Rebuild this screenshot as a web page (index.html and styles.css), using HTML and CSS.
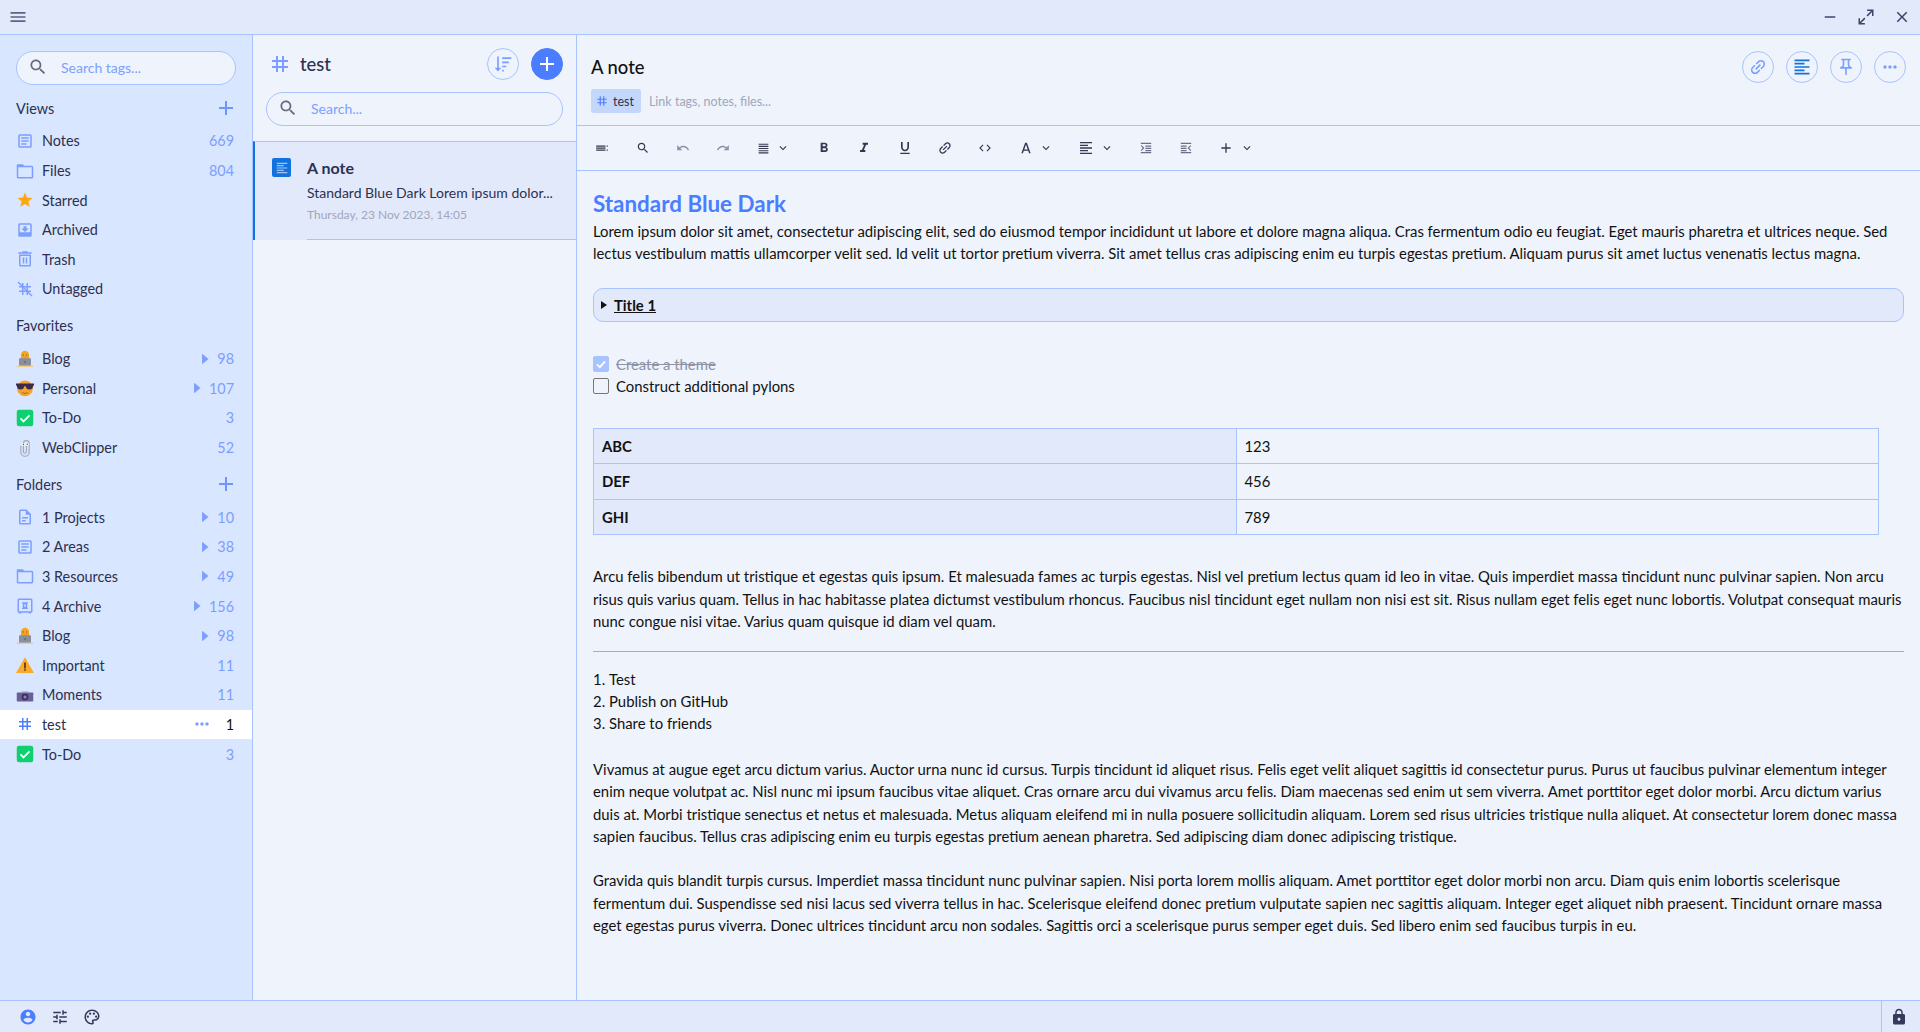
FILE: index.html
```html
<!DOCTYPE html>
<html lang="en">
<head>
    <meta charset="UTF-8">
    <title>A note</title>
    <link rel="stylesheet" href="styles.css">
</head>
<body>
<svg class="sprite" xmlns="http://www.w3.org/2000/svg">
    <symbol id="i-menu" viewBox="0 0 24 24"><path d="M3 18h18v-2H3v2zm0-5h18v-2H3v2zm0-7v2h18V6H3z"/></symbol>
    <symbol id="i-search" viewBox="0 0 24 24"><path d="M15.5 14h-.79l-.28-.27C15.41 12.59 16 11.11 16 9.5 16 5.91 13.09 3 9.5 3S3 5.91 3 9.5 5.91 16 9.5 16c1.61 0 3.09-.59 4.23-1.57l.27.28v.79l5 4.99L20.49 19l-4.99-5zm-6 0C7.01 14 5 11.99 5 9.5S7.01 5 9.5 5 14 7.01 14 9.5 11.99 14 9.5 14z"/></symbol>
    <symbol id="i-add" viewBox="0 0 24 24"><path d="M19 13h-6v6h-2v-6H5v-2h6V5h2v6h6v2z"/></symbol>
    <symbol id="i-close" viewBox="0 0 24 24"><path d="M19 6.41L17.59 5 12 10.59 6.41 5 5 6.41 10.59 12 5 17.59 6.41 19 12 13.41 17.59 19 19 17.59 13.41 12z"/></symbol>
    <symbol id="i-expand" viewBox="0 0 24 24"><path d="M3 21l7.500-7.500M3 13.500V21h7.500M21 3l-7.500 7.500M13.500 3H21v7.500" fill="none" stroke="currentColor" stroke-width="2"/></symbol>
    <symbol id="i-min" viewBox="0 0 24 24"><path d="M5 11h14v2H5z"/></symbol>
    <symbol id="i-note" viewBox="0 0 24 24"><path d="M5 3h14a2 2 0 0 1 2 2v14a2 2 0 0 1-2 2H5a2 2 0 0 1-2-2V5a2 2 0 0 1 2-2zm0 2v14h14V5H5zm2 2h10v2H7V7zm0 4h10v2H7v-2zm0 4h7v2H7v-2z"/></symbol>
    <symbol id="i-folder" viewBox="0 0 24 24"><path d="M2 3h7l2 2h10a2 2 0 0 1 2 2v13a2 2 0 0 1-2 2H3a2 2 0 0 1-2-2V4a1 1 0 0 1 1-1zm1 4v13h18V7H3z"/></symbol>
    <symbol id="i-star" viewBox="0 0 24 24"><path d="M12 17.270L18.180 21l-1.640-7.030L22 9.240l-7.190-.61L12 2 9.190 8.630 2 9.240l5.460 4.730L5.820 21z"/></symbol>
    <symbol id="i-archive" viewBox="0 0 24 24"><path d="M5 3h14a2 2 0 0 1 2 2v14a2 2 0 0 1-2 2H5a2 2 0 0 1-2-2V5a2 2 0 0 1 2-2zm0 2v10h14V5H5zm5 2h4v3h3l-5 4.500L7 10h3V7z"/></symbol>
    <symbol id="i-trash" viewBox="0 0 24 24"><path d="M9 1.500h6l1 1.500h5v2H3V3h5l1-1.500zM4 6h16v14a2 2 0 0 1-2 2H6a2 2 0 0 1-2-2V6zm2 2v12h12V8H6zm3 2h2v8H9v-8zm4 0h2v8h-2v-8z"/></symbol>
    <symbol id="i-untagged" viewBox="0 0 24 24"><path d="M20 10V8h-4V4h-2v4h-4V4H8v4H4v2h4v4H4v2h4v4h2v-4h4v4h2v-4h4v-2h-4v-4h4zm-6 4h-4v-4h4v4z"/><path d="M3.400 2L22 20.600 20.600 22 2 3.400z"/></symbol>
    <symbol id="i-tag" viewBox="0 0 24 24"><path d="M20 10V8h-4V4h-2v4h-4V4H8v4H4v2h4v4H4v2h4v4h2v-4h4v4h2v-4h4v-2h-4v-4h4zm-6 4h-4v-4h4v4z"/></symbol>
    <symbol id="i-doc" viewBox="0 0 24 24"><path d="M6 2h8l6 6v12a2 2 0 0 1-2 2H6a2 2 0 0 1-2-2V4a2 2 0 0 1 2-2zm0 2v16h12V9h-5V4H6zm2 8h8v2H8v-2zm0 4h5v2H8v-2z"/></symbol>
    <symbol id="i-vault" viewBox="0 0 24 24"><path d="M4 2h16a2 2 0 0 1 2 2v15a2 2 0 0 1-2 2v1h-3v-1H7v1H4v-1a2 2 0 0 1-2-2V4a2 2 0 0 1 2-2zm0 2v15h16V4H4zm4 3h8v1l-1 1v5l1 1v1H8v-1l1-1V9L8 8V7zm3 3v3h2v-3h-2z"/></symbol>
    <symbol id="i-caret" viewBox="0 0 24 24"><path d="M7 3l11 9-11 9z"/></symbol>
    <symbol id="i-more" viewBox="0 0 24 24"><path d="M6 10c-1.100 0-2 .9-2 2s.9 2 2 2 2-.9 2-2-.9-2-2-2zm12 0c-1.100 0-2 .9-2 2s.9 2 2 2 2-.9 2-2-.9-2-2-2zm-6 0c-1.100 0-2 .9-2 2s.9 2 2 2 2-.9 2-2-.9-2-2-2z"/></symbol>
    <symbol id="i-blog" viewBox="0 0 24 24"><circle cx="12" cy="6.500" r="5.500" fill="#f5a623"/><path d="M6.500 8h11v6h-11z" fill="#f0a020"/><circle cx="9.800" cy="6.500" r=".8" fill="#8a5a10"/><circle cx="14.200" cy="6.500" r=".8" fill="#8a5a10"/><rect x="4" y="11" width="16" height="10" rx="1" fill="#8a8fa0"/><circle cx="12" cy="16" r="1.200" fill="#60657a"/><path d="M1 21h22v1.500H1z" fill="#f3c76a"/></symbol>
    <symbol id="i-cool" viewBox="0 0 24 24"><circle cx="12" cy="12.500" r="10.500" fill="#f5a32a"/><path d="M0 6h24v2.500h-1c0 3-2 5.500-5 5.500s-4.800-2-5-4.500h-2C10.800 12 9 14 6 14S1 11.500 1 8.500H0z" fill="#3a2a50"/><path d="M8 18c2.500 1.500 5.500 1.500 8 0" fill="none" stroke="#a85c10" stroke-width="1.200"/></symbol>
    <symbol id="i-check" viewBox="0 0 24 24"><rect x="1" y="1" width="22" height="22" rx="3" fill="#0ed06e"/><path d="M6 12.500l4 4 8-8" fill="none" stroke="#fff" stroke-width="2.400"/></symbol>
    <symbol id="i-clip" viewBox="0 0 24 24"><path d="M6.500 9v8.500a5.500 5.500 0 0 0 11 0V6a3.800 3.800 0 0 0-7.600 0v11a2 2 0 0 0 4 0V9" fill="none" stroke="#a3a7b5" stroke-width="1.500"/><circle cx="10" cy="7" r="2" fill="#fff"/><circle cx="15" cy="7" r="2" fill="#fff"/><circle cx="10" cy="7" r=".9" fill="#444"/><circle cx="15" cy="7" r=".9" fill="#444"/></symbol>
    <symbol id="i-warn" viewBox="0 0 24 24"><path d="M12 1.500L24 22.500H0z" fill="#fca82a"/><path d="M11 8.500h2v8h-2zM11 17.800h2v2h-2z" fill="#3a2a20"/></symbol>
    <symbol id="i-camera" viewBox="0 0 24 24"><path d="M8 6.500h8l1 2H7z" fill="#b9bccb"/><rect x="1" y="8.500" width="22" height="12" rx="1" fill="#6a5f96"/><circle cx="12" cy="14.500" r="4.500" fill="#3d3560"/><circle cx="12" cy="14.500" r="2" fill="#8f85c0"/></symbol>
    <symbol id="i-sort" viewBox="0 0 24 24"><path d="M5 3h2v13.500h3L6 21l-4-4.500h3V3zM11 4h11v2H11V4zm0 5h8v2h-8V9zm0 5h5v2h-5v-2zm0 5h2v2h-2v-2z"/></symbol>
    <symbol id="i-link" viewBox="0 0 24 24"><g transform="rotate(-45 12 12)"><path d="M3.900 12c0-1.710 1.390-3.100 3.100-3.100h4V7H7c-2.760 0-5 2.240-5 5s2.240 5 5 5h4v-1.900H7c-1.710 0-3.100-1.390-3.100-3.100zM8 13h8v-2H8v2zm9-6h-4v1.900h4c1.710 0 3.100 1.390 3.100 3.100s-1.390 3.100-3.100 3.100h-4V17h4c2.760 0 5-2.240 5-5s-2.240-5-5-5z"/></g></symbol>
    <symbol id="i-left" viewBox="0 0 24 24"><path d="M15 15H3v2h12v-2zm0-8H3v2h12V7zM3 13h18v-2H3v2zm0 8h18v-2H3v2zM3 3v2h18V3H3z"/></symbol>
    <symbol id="i-pin" viewBox="0 0 24 24"><path d="M14 4v5c0 1.120.37 2.160 1 3H9c.65-.86 1-1.900 1-3V4h4m3-2H7c-.55 0-1 .45-1 1s.45 1 1 1h1v5c0 1.660-1.340 3-3 3v2h5.970v7l1 1 1-1v-7H19v-2c-1.660 0-3-1.340-3-3V4h1c.55 0 1-.45 1-1s-.45-1-1-1z"/></symbol>
    <symbol id="i-side" viewBox="0 0 24 24"><path d="M2 7.500h16v2.200H2zM2 11h16v2.200H2zM2 14.500h16v2.200H2zM20 7.500h2v2.200h-2zM20 14.500h2v2.200h-2z"/></symbol>
    <symbol id="i-undo" viewBox="0 0 24 24"><path d="M12.500 8c-2.650 0-5.050.99-6.900 2.600L2 7v9h9l-3.620-3.620c1.390-1.160 3.160-1.880 5.120-1.880 3.540 0 6.550 2.310 7.600 5.500l2.370-.78C21.080 11.030 17.150 8 12.500 8z"/></symbol>
    <symbol id="i-redo" viewBox="0 0 24 24"><path d="M18.400 10.600C16.550 8.990 14.150 8 11.500 8c-4.650 0-8.580 3.030-9.960 7.220L3.900 16c1.050-3.190 4.050-5.500 7.600-5.500 1.950 0 3.730.72 5.120 1.880L13 16h9V7l-3.600 3.600z"/></symbol>
    <symbol id="i-justify" viewBox="0 0 24 24"><path d="M3 21h18v-2H3v2zm0-4h18v-2H3v2zm0-4h18v-2H3v2zm0-4h18V7H3v2zm0-6v2h18V3H3z"/></symbol>
    <symbol id="i-chev" viewBox="0 0 24 24"><path d="M7.410 8.590L12 13.170l4.590-4.580L18 10l-6 6-6-6z"/></symbol>
    <symbol id="i-bold" viewBox="0 0 24 24"><path d="M15.600 10.790c.97-.67 1.650-1.770 1.650-2.790 0-2.260-1.750-4-4-4H7v14h7.040c2.090 0 3.710-1.700 3.710-3.790 0-1.520-.86-2.820-2.150-3.420zM10 6.500h3c.83 0 1.500.67 1.500 1.500s-.67 1.500-1.500 1.500h-3v-3zm3.500 9H10v-3h3.500c.83 0 1.500.67 1.500 1.500s-.67 1.500-1.500 1.500z"/></symbol>
    <symbol id="i-italic" viewBox="0 0 24 24"><path d="M10 4v3h2.210l-3.420 8H6v3h8v-3h-2.210l3.420-8H18V4z"/></symbol>
    <symbol id="i-under" viewBox="0 0 24 24"><path d="M12 17c3.310 0 6-2.690 6-6V3h-2.500v8c0 1.930-1.570 3.500-3.500 3.500S8.500 12.930 8.500 11V3H6v8c0 3.310 2.690 6 6 6zm-7 2v2h14v-2H5z"/></symbol>
    <symbol id="i-code" viewBox="0 0 24 24"><path d="M9.400 16.600L4.800 12l4.600-4.600L8 6l-6 6 6 6 1.400-1.400zm5.200 0l4.600-4.600-4.600-4.600L16 6l6 6-6 6-1.400-1.400z"/></symbol>
    <symbol id="i-color" viewBox="0 0 24 24"><path d="M10.500 3h3L20 21h-2.700l-1.500-4.300H8.200L6.700 21H4L10.500 3zM9 14.500h6L12 6 9 14.500z"/></symbol>
    <symbol id="i-indent" viewBox="0 0 24 24"><path d="M3 3h18v2.200H3zM11 7.500h10v2.200H11zM11 11.500h10v2.200H11zM11 15.500h10v2.200H11zM3 19h18v2.200H3zM3 8.500l1.400-1.400 5 5-5 5L3 15.700l3.600-3.600z"/></symbol>
    <symbol id="i-outdent" viewBox="0 0 24 24"><path d="M3 3h18v2.200H3zM3 7.500h10v2.200H3zM3 11.500h10v2.200H3zM3 15.500h10v2.200H3zM3 19h18v2.200H3zM21 8.500l-1.400-1.400-5 5 5 5 1.400-1.400-3.600-3.600z"/></symbol>
    <symbol id="i-user" viewBox="0 0 24 24"><path d="M12 2C6.480 2 2 6.480 2 12s4.480 10 10 10 10-4.480 10-10S17.520 2 12 2zm0 3c1.660 0 3 1.340 3 3s-1.340 3-3 3-3-1.340-3-3 1.340-3 3-3zm0 14.200c-2.500 0-4.710-1.280-6-3.220.03-1.990 4-3.080 6-3.080 1.990 0 5.970 1.090 6 3.080-1.290 1.940-3.500 3.220-6 3.220z"/></symbol>
    <symbol id="i-tune" viewBox="0 0 24 24"><path d="M3 17v2h6v-2H3zM3 5v2h10V5H3zm10 16v-2h8v-2h-8v-2h-2v6h2zM7 9v2H3v2h4v2h2V9H7zm14 4v-2H11v2h10zm-6-4h2V7h4V5h-4V3h-2v6z"/></symbol>
    <symbol id="i-palette" viewBox="0 0 24 24"><path d="M12 22C6.490 22 2 17.510 2 12S6.490 2 12 2s10 4.040 10 9c0 3.310-2.690 6-6 6h-1.770c-.28 0-.5.22-.5.5 0 .12.05.23.13.33.41.47.64 1.060.64 1.670 0 1.380-1.120 2.500-2.500 2.500zm0-18c-4.410 0-8 3.590-8 8s3.590 8 8 8c.28 0 .5-.22.5-.5 0-.16-.08-.28-.14-.35-.41-.46-.63-1.050-.63-1.650 0-1.380 1.120-2.500 2.500-2.500H16c2.210 0 4-1.790 4-4 0-3.860-3.590-7-8-7z"/><circle cx="6.500" cy="11.500" r="1.500"/><circle cx="9.500" cy="7.500" r="1.500"/><circle cx="14.500" cy="7.500" r="1.500"/><circle cx="17.500" cy="11.500" r="1.500"/></symbol>
    <symbol id="i-lock" viewBox="0 0 24 24"><path d="M18 8h-1V6c0-2.760-2.240-5-5-5S7 3.240 7 6v2H6c-1.100 0-2 .9-2 2v10c0 1.100.9 2 2 2h12c1.100 0 2-.9 2-2V10c0-1.100-.9-2-2-2zm-6 9c-1.100 0-2-.9-2-2s.9-2 2-2 2 .9 2 2-.9 2-2 2zm3.100-9H8.900V6c0-1.710 1.390-3.100 3.100-3.100 1.710 0 3.100 1.390 3.100 3.100v2z"/></symbol>
</svg>

<div class="app">
    <header class="titlebar">
        <svg class="ico tb-menu"><use href="#i-menu"/></svg>
        <div class="win-controls">
            <svg class="ico"><use href="#i-min"/></svg>
            <svg class="ico"><use href="#i-expand"/></svg>
            <svg class="ico"><use href="#i-close"/></svg>
        </div>
    </header>

    <div class="panes">
        <aside class="sidebar">
            <div class="pill-search side-search">
                <svg class="ico"><use href="#i-search"/></svg>
                <span>Search tags...</span>
            </div>

            <div class="group-head first"><span>Views</span><svg class="ico head-add"><use href="#i-add"/></svg></div>
            <div class="row"><svg class="ico blue"><use href="#i-note"/></svg><span class="name">Notes</span><span class="count">669</span></div>
            <div class="row"><svg class="ico blue"><use href="#i-folder"/></svg><span class="name">Files</span><span class="count">804</span></div>
            <div class="row"><svg class="ico star"><use href="#i-star"/></svg><span class="name">Starred</span></div>
            <div class="row"><svg class="ico blue"><use href="#i-archive"/></svg><span class="name">Archived</span></div>
            <div class="row"><svg class="ico blue"><use href="#i-trash"/></svg><span class="name">Trash</span></div>
            <div class="row"><svg class="ico blue"><use href="#i-untagged"/></svg><span class="name">Untagged</span></div>

            <div class="group-head"><span>Favorites</span></div>
            <div class="row"><svg class="ico"><use href="#i-blog"/></svg><span class="name">Blog</span><svg class="caret"><use href="#i-caret"/></svg><span class="count">98</span></div>
            <div class="row"><svg class="ico"><use href="#i-cool"/></svg><span class="name">Personal</span><svg class="caret"><use href="#i-caret"/></svg><span class="count">107</span></div>
            <div class="row"><svg class="ico"><use href="#i-check"/></svg><span class="name">To-Do</span><span class="count">3</span></div>
            <div class="row"><svg class="ico"><use href="#i-clip"/></svg><span class="name">WebClipper</span><span class="count">52</span></div>

            <div class="group-head"><span>Folders</span><svg class="ico head-add"><use href="#i-add"/></svg></div>
            <div class="row"><svg class="ico blue"><use href="#i-doc"/></svg><span class="name">1 Projects</span><svg class="caret"><use href="#i-caret"/></svg><span class="count">10</span></div>
            <div class="row"><svg class="ico blue"><use href="#i-note"/></svg><span class="name">2 Areas</span><svg class="caret"><use href="#i-caret"/></svg><span class="count">38</span></div>
            <div class="row"><svg class="ico blue"><use href="#i-folder"/></svg><span class="name">3 Resources</span><svg class="caret"><use href="#i-caret"/></svg><span class="count">49</span></div>
            <div class="row"><svg class="ico blue"><use href="#i-vault"/></svg><span class="name">4 Archive</span><svg class="caret"><use href="#i-caret"/></svg><span class="count">156</span></div>
            <div class="row"><svg class="ico"><use href="#i-blog"/></svg><span class="name">Blog</span><svg class="caret"><use href="#i-caret"/></svg><span class="count">98</span></div>
            <div class="row"><svg class="ico"><use href="#i-warn"/></svg><span class="name">Important</span><span class="count">11</span></div>
            <div class="row"><svg class="ico"><use href="#i-camera"/></svg><span class="name">Moments</span><span class="count">11</span></div>
            <div class="row active"><svg class="ico accent"><use href="#i-tag"/></svg><span class="name">test</span><svg class="row-more"><use href="#i-more"/></svg><span class="count">1</span></div>
            <div class="row"><svg class="ico"><use href="#i-check"/></svg><span class="name">To-Do</span><span class="count">3</span></div>
        </aside>

        <section class="notelist">
            <div class="list-head">
                <svg class="ico blue list-hash"><use href="#i-tag"/></svg>
                <h2>test</h2>
                <button class="round"><svg class="ico blue"><use href="#i-sort"/></svg></button>
                <button class="round solid"><svg class="ico"><use href="#i-add"/></svg></button>
            </div>
            <div class="pill-search list-search">
                <svg class="ico"><use href="#i-search"/></svg>
                <span>Search...</span>
            </div>
            <div class="note-card">
                <div class="note-icon"><svg class="ico"><use href="#i-left"/></svg></div>
                <div class="note-body">
                    <div class="note-title">A note</div>
                    <div class="note-excerpt">Standard Blue Dark Lorem ipsum dolor...</div>
                    <div class="note-date">Thursday, 23 Nov 2023, 14:05</div>
                </div>
            </div>
        </section>

        <main class="editor">
            <div class="ed-head">
                <div class="ed-titles">
                    <h1>A note</h1>
                    <div class="ed-tags">
                        <span class="chip"><svg class="ico"><use href="#i-tag"/></svg>test</span>
                        <span class="tag-hint">Link tags, notes, files...</span>
                    </div>
                </div>
                <div class="ed-actions">
                    <button class="round"><svg class="ico blue"><use href="#i-link"/></svg></button>
                    <button class="round"><svg class="ico deep"><use href="#i-left"/></svg></button>
                    <button class="round"><svg class="ico blue"><use href="#i-pin"/></svg></button>
                    <button class="round"><svg class="ico blue"><use href="#i-more"/></svg></button>
                </div>
            </div>

            <div class="toolbar">
                <span class="tool"><svg class="ico"><use href="#i-side"/></svg></span>
                <span class="tool"><svg class="ico"><use href="#i-search"/></svg></span>
                <span class="tool dim"><svg class="ico"><use href="#i-undo"/></svg></span>
                <span class="tool dim"><svg class="ico"><use href="#i-redo"/></svg></span>
                <span class="tool wide"><svg class="ico small"><use href="#i-justify"/></svg><svg class="ico chev"><use href="#i-chev"/></svg></span>
                <span class="tool"><svg class="ico big"><use href="#i-bold"/></svg></span>
                <span class="tool"><svg class="ico big"><use href="#i-italic"/></svg></span>
                <span class="tool"><svg class="ico big"><use href="#i-under"/></svg></span>
                <span class="tool"><svg class="ico big"><use href="#i-link"/></svg></span>
                <span class="tool"><svg class="ico"><use href="#i-code"/></svg></span>
                <span class="tool wide"><svg class="ico"><use href="#i-color"/></svg><svg class="ico chev"><use href="#i-chev"/></svg></span>
                <span class="tool wide"><svg class="ico big"><use href="#i-left"/></svg><svg class="ico chev"><use href="#i-chev"/></svg></span>
                <span class="tool dim2"><svg class="ico"><use href="#i-indent"/></svg></span>
                <span class="tool dim2"><svg class="ico"><use href="#i-outdent"/></svg></span>
                <span class="tool wide"><svg class="ico big"><use href="#i-add"/></svg><svg class="ico chev"><use href="#i-chev"/></svg></span>
            </div>

            <article class="doc">
                <h3>Standard Blue Dark</h3>
                <p>Lorem ipsum dolor sit amet, consectetur adipiscing elit, sed do eiusmod tempor incididunt ut labore et dolore magna aliqua. Cras fermentum odio eu feugiat. Eget mauris pharetra et ultrices neque. Sed lectus vestibulum mattis ullamcorper velit sed. Id velit ut tortor pretium viverra. Sit amet tellus cras adipiscing enim eu turpis egestas pretium. Aliquam purus sit amet luctus venenatis lectus magna.</p>

                <div class="details"><span class="tri"></span><u>Title 1</u></div>

                <div class="checks">
                    <div class="check done"><span class="box"><svg viewBox="0 0 24 24"><path d="M5 12.500l5 5 9-10" fill="none" stroke="#fff" stroke-width="3"/></svg></span><s>Create a theme</s></div>
                    <div class="check"><span class="box"></span>Construct additional pylons</div>
                </div>

                <table>
                    <tr><th>ABC</th><td>123</td></tr>
                    <tr><th>DEF</th><td>456</td></tr>
                    <tr><th>GHI</th><td>789</td></tr>
                </table>

                <p>Arcu felis bibendum ut tristique et egestas quis ipsum. Et malesuada fames ac turpis egestas. Nisl vel pretium lectus quam id leo in vitae. Quis imperdiet massa tincidunt nunc pulvinar sapien. Non arcu risus quis varius quam. Tellus in hac habitasse platea dictumst vestibulum rhoncus. Faucibus nisl tincidunt eget nullam non nisi est sit. Risus nullam eget felis eget nunc lobortis. Volutpat consequat mauris nunc congue nisi vitae. Varius quam quisque id diam vel quam.</p>

                <hr>

                <ol>
                    <li>Test</li>
                    <li>Publish on GitHub</li>
                    <li>Share to friends</li>
                </ol>

                <p class="gap first-gap">Vivamus at augue eget arcu dictum varius. Auctor urna nunc id cursus. Turpis tincidunt id aliquet risus. Felis eget velit aliquet sagittis id consectetur purus. Purus ut faucibus pulvinar elementum integer enim neque volutpat ac. Nisl nunc mi ipsum faucibus vitae aliquet. Cras ornare arcu dui vivamus arcu felis. Diam maecenas sed enim ut sem viverra. Amet porttitor eget dolor morbi. Arcu dictum varius duis at. Morbi tristique senectus et netus et malesuada. Metus aliquam eleifend mi in nulla posuere sollicitudin aliquam. Lorem sed risus ultricies tristique nulla aliquet. At consectetur lorem donec massa sapien faucibus. Tellus cras adipiscing enim eu turpis egestas pretium aenean pharetra. Sed adipiscing diam donec adipiscing tristique.</p>

                <p class="gap">Gravida quis blandit turpis cursus. Imperdiet massa tincidunt nunc pulvinar sapien. Nisi porta lorem mollis aliquam. Amet porttitor eget dolor morbi non arcu. Diam quis enim lobortis scelerisque fermentum dui. Suspendisse sed nisi lacus sed viverra tellus in hac. Scelerisque eleifend donec pretium vulputate sapien nec sagittis aliquam. Integer eget aliquet nibh praesent. Tincidunt ornare massa eget egestas purus viverra. Donec ultrices tincidunt arcu non sodales. Sagittis orci a scelerisque purus semper eget duis. Sed libero enim sed faucibus turpis in eu.</p>
            </article>
        </main>
    </div>

    <footer class="statusbar">
        <svg class="ico accent"><use href="#i-user"/></svg>
        <svg class="ico"><use href="#i-tune"/></svg>
        <svg class="ico"><use href="#i-palette"/></svg>
        <div class="lockbox"><svg class="ico"><use href="#i-lock"/></svg></div>
    </footer>
</div>
</body>
</html>
```

FILE: styles.css
```css
* {
    box-sizing: border-box;
}
body {
    margin: 0;
    font-family: "Lato", "Liberation Sans", sans-serif;
    font-size: 14.4px;
    color: #2c3150;
    background: #eef3fc;
}
.sprite {
    display: none;
}
.ico {
    width: 18px;
    height: 18px;
    fill: currentColor;
    flex: none;
}
.blue {
    color: #7c9fff;
}
.accent {
    color: #4a7dff;
}
.deep {
    color: #1273de;
}
.star {
    color: #ffa70f;
}
.app {
    display: flex;
    flex-direction: column;
    height: 1032px;
    overflow: hidden;
}

/* title bar */
.titlebar {
    height: 35px;
    flex: none;
    display: flex;
    align-items: center;
    justify-content: space-between;
    padding: 0 9px 0 8px;
    background: #e2e9fb;
    border-bottom: 1px solid #a8c3ff;
    color: #5a6484;
}
.tb-menu {
    width: 20px;
    height: 20px;
}
.win-controls {
    display: flex;
    gap: 18px;
    color: #3c4568;
}
.panes {
    flex: 1;
    display: flex;
    min-height: 0;
}

/* sidebar */
.sidebar {
    width: 253px;
    flex: none;
    background: #d9e6ff;
    border-right: 1px solid #a8c3ff;
    padding-top: 16px;
}
.pill-search {
    display: flex;
    align-items: center;
    height: 34px;
    border: 1px solid #a8c3ff;
    border-radius: 17px;
    background: #eef3fc;
    color: #7c9fff;
    font-size: 14px;
    padding: 0 0 2px 11px;
    gap: 13px;
}
.pill-search .ico {
    width: 20px;
    height: 20px;
    color: #656a7c;
}
.side-search {
    margin: 0 16px;
}
.group-head {
    display: flex;
    align-items: center;
    justify-content: space-between;
    height: 30px;
    margin: 7px 16px 3.2px;
    font-size: 14.4px;
    color: #2c3150;
}
.group-head.first {
    margin-top: 8px;
}
.head-add {
    width: 24px;
    height: 24px;
    margin-right: -2px;
    color: #6d94ff;
}
.row {
    display: flex;
    align-items: center;
    height: 29.6px;
    padding: 0 18px 0 16px;
    color: #2c3150;
}
.row .name {
    margin-left: 8px;
    flex: 1;
}
.row.active {
    background: #fff;
}
.count {
    color: #7c9fff;
}
.row.active .count {
    color: #111;
}
.caret {
    width: 14px;
    height: 14px;
    fill: #7c9fff;
    margin-right: 5px;
}
.row-more {
    width: 20px;
    height: 20px;
    fill: #7c9fff;
    margin-right: 14px;
}

/* note list */
.notelist {
    width: 324px;
    flex: none;
    background: #eef3fc;
    border-right: 1px solid #a8c3ff;
}
.list-head {
    display: flex;
    align-items: center;
    height: 32px;
    margin-top: 13px;
    padding: 0 13px 0 15px;
    gap: 12px;
}
.list-hash {
    width: 24px;
    height: 24px;
}
.list-head h2 {
    flex: 1;
    margin: 0 0 0 -4px;
    font-size: 18.4px;
    font-weight: 500;
    color: #2c3150;
}
.round {
    width: 32px;
    height: 32px;
    padding: 0;
    display: flex;
    align-items: center;
    justify-content: center;
    border: 1px solid #a8c3ff;
    border-radius: 50%;
    background: transparent;
}
.round .ico {
    width: 20px;
    height: 20px;
}
.round.solid {
    background: #4a7dff;
    border-color: #4a7dff;
    color: #fff;
}
.round.solid .ico {
    width: 24px;
    height: 24px;
}
.list-search {
    margin: 12px 13px 15px;
}
.note-card {
    display: flex;
    border-top: 1px solid #a8c3ff;
    height: 99px;
    background: #e2e9fb;
    border-left: 2px solid #1273de;
    position: relative;
    padding: 16px 0 0 17px;
}
.note-card::after {
    content: "";
    position: absolute;
    left: 52px;
    right: 0;
    bottom: 0;
    border-bottom: 1px solid #a8c3ff;
}
.note-icon {
    width: 19px;
    height: 19px;
    border-radius: 2px;
    background: #1273de;
    color: #9cc4f8;
    display: flex;
    align-items: center;
    justify-content: center;
}
.note-icon .ico {
    width: 14px;
    height: 14px;
}
.note-body {
    margin-left: 16px;
}
.note-title {
    font-size: 16px;
    font-weight: 700;
    line-height: 20px;
}
.note-excerpt {
    font-size: 14px;
    line-height: 20px;
    margin-top: 5px;
}
.note-date {
    font-size: 12px;
    line-height: 18px;
    margin-top: 3px;
    color: #a1a6ba;
}

/* editor */
.editor {
    flex: 1;
    min-width: 0;
    display: flex;
    flex-direction: column;
    background: #eef3fc;
}
.ed-head {
    height: 91px;
    flex: none;
    display: flex;
    justify-content: space-between;
    padding: 16px 14px 0 14px;
    border-bottom: 1px solid #a8c3ff;
}
.ed-head h1 {
    margin: 0;
    font-size: 18.4px;
    line-height: 32px;
    font-weight: 500;
    color: #111;
}
.ed-tags {
    display: flex;
    align-items: center;
    gap: 8px;
    margin-top: 6px;
}
.chip {
    display: flex;
    align-items: center;
    gap: 4px;
    height: 24px;
    padding: 0 7px 0 4px;
    border-radius: 3px;
    background: #c3d7fd;
    font-size: 12.5px;
    color: #2c3150;
}
.chip .ico {
    width: 14px;
    height: 14px;
    color: #4a7dff;
}
.tag-hint {
    font-size: 12.5px;
    color: #a1a6ba;
}
.ed-actions {
    display: flex;
    gap: 12px;
}
.toolbar {
    height: 45px;
    flex: none;
    display: flex;
    align-items: center;
    padding-left: 5px;
    border-bottom: 1px solid #a8c3ff;
    color: #33384f;
}
.tool {
    display: flex;
    align-items: center;
    width: 40.4px;
    justify-content: center;
}
.tool .ico {
    width: 14px;
    height: 14px;
}
.tool .ico.small {
    width: 13px;
    height: 13px;
}
.tool .ico.big {
    width: 16px;
    height: 16px;
}
.tool.wide {
    width: 60px;
    gap: 6px;
}
.tool .chev {
    width: 14px;
    height: 14px;
}
.tool.dim {
    color: #8d92a6;
}
.tool.dim2 {
    color: #6b7088;
}

/* document */
.doc {
    flex: 1;
    padding: 20px 16px 0 16px;
    font-size: 14.87px;
    line-height: 22.4px;
    color: #111;
}
.doc h3 {
    margin: 0;
    font-size: 22.4px;
    line-height: 26px;
    font-weight: 700;
    color: #4a7dff;
    height: 29px;
}
.doc p {
    margin: 0;
}
.details {
    display: flex;
    align-items: center;
    height: 34px;
    margin-top: 23px;
    padding-left: 7px;
    border: 1px solid #a8c3ff;
    border-radius: 10px;
    background: #e2e9fb;
    font-weight: 700;
}
.tri {
    width: 0;
    height: 0;
    border-left: 6px solid #111;
    border-top: 4px solid transparent;
    border-bottom: 4px solid transparent;
    margin-right: 7px;
}
.checks {
    margin-top: 31px;
}
.check {
    display: flex;
    align-items: center;
    height: 22.4px;
    gap: 7px;
}
.box {
    width: 16px;
    height: 16px;
    border: 1px solid #777;
    border-radius: 2px;
}
.check.done .box {
    background: #a8c3ff;
    border-color: #a8c3ff;
}
.box svg {
    display: block;
    width: 14px;
    height: 14px;
}
.check.done s {
    color: #8d92a6;
}
table {
    width: 1286px;
    margin: 30px 0 30px;
    border-collapse: collapse;
    table-layout: fixed;
}
th, td {
    border: 1px solid #a8c3ff;
    padding: 0 8px;
    height: 35.6px;
    text-align: left;
}
th {
    background: #e2e9fb;
    font-weight: 700;
}
hr {
    border: 0;
    border-top: 1px solid #8fadff;
    margin: 18px 0 16px;
}
ol {
    margin: 0;
    padding-left: 16px;
}
.doc .gap {
    margin-top: 22px;
}
.doc .first-gap {
    margin-top: 23px;
}
.statusbar {
    height: 32px;
    flex: none;
    display: flex;
    align-items: center;
    gap: 14px;
    padding-left: 19px;
    background: #e2e9fb;
    border-top: 1px solid #a8c3ff;
    color: #333a5c;
}
.lockbox {
    margin-left: auto;
    width: 39px;
    height: 100%;
    display: flex;
    align-items: center;
    justify-content: center;
    padding-right: 4px;
    border-left: 1px solid #a8c3ff;
}
```
